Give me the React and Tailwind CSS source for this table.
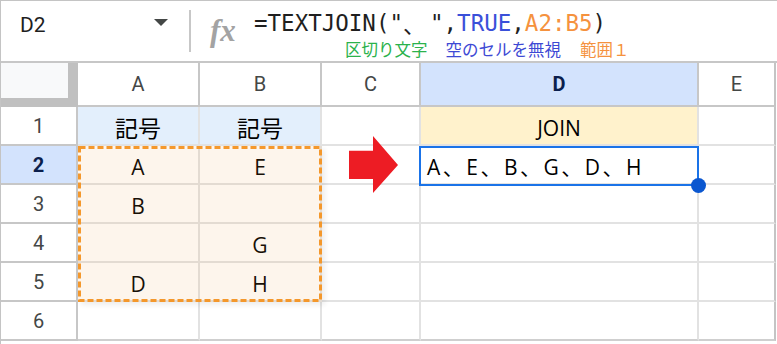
import React from "react";

const cellFont = { fontFamily: '"Open Sans","Noto Sans CJK JP",sans-serif' };
const hdrFont = { fontFamily: 'Roboto,"Liberation Sans",Arial,sans-serif' };

function ColHdr({ children, active, last }) {
  return (
    <div
      className={`flex items-center justify-center border-b-2 ${last ? "border-r-2 border-r-[#c4c4c4]" : "border-r-2 border-r-[#c7c7c7]"} border-b-[#c7c7c7] text-[20px] ${active ? "bg-[#d3e3fd] font-bold text-[#0b1f4d]" : "bg-white text-[#444746]"}`}
      style={hdrFont}
    >
      {children}
    </div>
  );
}

function RowHdr({ children, active }) {
  return (
    <div
      className={`flex items-center justify-center border-r-2 border-b-2 border-r-[#c7c7c7] border-b-[#c7c7c7] text-[20px] ${active ? "bg-[#d3e3fd] font-bold text-[#0b1f4d]" : "bg-white text-[#444746]"}`}
      style={hdrFont}
    >
      {children}
    </div>
  );
}

function Cell({ children, bg = "bg-white", last, lastRow, align = "center", size = "text-[21px]", extra = "" }) {
  return (
    <div
      className={`flex items-center ${align === "center" ? "justify-center" : "justify-start pl-[6px]"} pt-[6px] border-b-2 border-r-2 ${last ? "border-r-[#c4c4c4]" : "border-r-[#e2e2e2]"} ${lastRow ? "border-b-[#cfcfcf]" : "border-b-[#e2e2e2]"} ${bg} ${size} text-black ${extra}`}
      style={cellFont}
    >
      {children}
    </div>
  );
}

export default function App() {
  const rows = [
    ["記号", "記号", "", "JOIN", ""],
    ["A", "E", "", "A、E、B、G、D、H", ""],
    ["B", "", "", "", ""],
    ["", "G", "", "", ""],
    ["D", "H", "", "", ""],
    ["", "", "", "", ""],
  ];

  return (
    <div className="relative w-[777px] h-[344px] bg-white border-t border-l border-[#c4c4c4] overflow-hidden">
      {/* Formula bar */}
      <div className="flex h-[62px] border-b-2 border-[#c7c7c7]">
        <div className="w-[188px] flex justify-between pl-[19px] pr-[21px]">
          <div className="mt-[14px] text-[21px] leading-none text-[#1f1f1f]" style={hdrFont}>
            D2
          </div>
          <svg width="14" height="7" viewBox="0 0 14 7" className="mt-[18px]">
            <polygon points="0,0 14,0 7,7" fill="#444746" />
          </svg>
        </div>
        <div className="w-[2px] h-[42px] mt-[9px] bg-[#c7c7c7]" />
        <div
          className="ml-[19px] w-[28px] mt-[14px] text-[31px] leading-none italic font-bold text-[#a3a3a3]"
          style={{ fontFamily: '"Liberation Serif","DejaVu Serif",serif' }}
        >
          fx
        </div>
        <div className="ml-[16px] flex flex-col pt-[11px]">
          <div
            className="text-[22.5px] leading-none text-[#1f1f1f] whitespace-nowrap flex"
            style={{ fontFamily: '"DejaVu Sans Mono","Noto Sans CJK JP",monospace' }}
          >
            <span>=TEXTJOIN("</span>
            <span className="inline-block w-[27px]" style={{ fontFamily: '"Noto Sans CJK JP",sans-serif' }}>、</span>
            <span>",</span>
            <span className="text-[#3a50d9]">TRUE</span>
            <span>,</span>
            <span className="text-[#f5923e]">A2:B5</span>
            <span>)</span>
          </div>
          <div
            className="mt-[6px] flex text-[16.5px] leading-none whitespace-nowrap"
            style={{ fontFamily: '"Noto Sans CJK JP",sans-serif' }}
          >
            <span className="ml-[91px] text-[#2bb24c]">区切り文字</span>
            <span className="ml-[18px] text-[#3d49d4]">空のセルを無視</span>
            <span className="ml-[19px] text-[#f5923e]">範囲１</span>
          </div>
        </div>
      </div>

      {/* Sheet grid */}
      <div className="grid grid-cols-[77px_122px_122px_99px_278px_77px] grid-rows-[44px_repeat(6,39px)]">
        <div className="bg-[#c0c0c0] border-r-2 border-b-2 border-[#c0c0c0]">
          <div className="w-[67px] h-[35px] bg-[#f8f9fa]" />
        </div>
        <ColHdr>A</ColHdr>
        <ColHdr>B</ColHdr>
        <ColHdr>C</ColHdr>
        <ColHdr active>D</ColHdr>
        <ColHdr last>E</ColHdr>

        {rows.map((r, i) => {
          const n = i + 1;
          const lastRow = n === 6;
          return (
            <React.Fragment key={n}>
              <RowHdr active={n === 2}>{n}</RowHdr>
              {r.map((v, j) => {
                let bg = "bg-white";
                let size = "text-[21px]";
                let align = "center";
                let extra = "";
                if (n === 1 && (j === 0 || j === 1)) {
                  bg = "bg-[#e3effc]";
                  size = "text-[23px]";
                }
                if (n === 1 && j === 3) bg = "bg-[#fff2cc]";
                if (n === 2 && j === 3) {
                  align = "left";
                  extra = "tracking-[2.5px]";
                }
                return (
                  <Cell key={j} bg={bg} size={size} align={align} extra={extra} last={j === 4} lastRow={lastRow}>
                    {v}
                  </Cell>
                );
              })}
            </React.Fragment>
          );
        })}
      </div>

      {/* Range A2:B5 highlight */}
      <div className="absolute left-[77px] top-[145px] w-[244px] h-[156px] bg-[#f0a040]/[0.1] shadow-[3px_3px_5px_rgba(0,0,0,0.07)] pointer-events-none" />
      <svg className="absolute left-[77px] top-[145px] pointer-events-none" width="244" height="156">
        <rect x="1.5" y="1.5" width="241" height="153" fill="none" stroke="#f4982c" strokeWidth="3" strokeDasharray="6 3" />
      </svg>

      {/* Red arrow */}
      <svg className="absolute left-[347px] top-[134px]" width="52" height="60">
        <polygon points="1,15.7 25,15.7 25,1 50,30 25,58 25,44 1,44" fill="#ed1c24" />
      </svg>

      {/* Selection D2 */}
      <div className="absolute left-[418px] top-[145px] w-[280px] h-[40px] border-2 border-[#1a73e8] pointer-events-none" />
      <div className="absolute left-[690px] top-[177px] w-[15px] h-[15px] rounded-full bg-[#0b57d0]" />
    </div>
  );
}
